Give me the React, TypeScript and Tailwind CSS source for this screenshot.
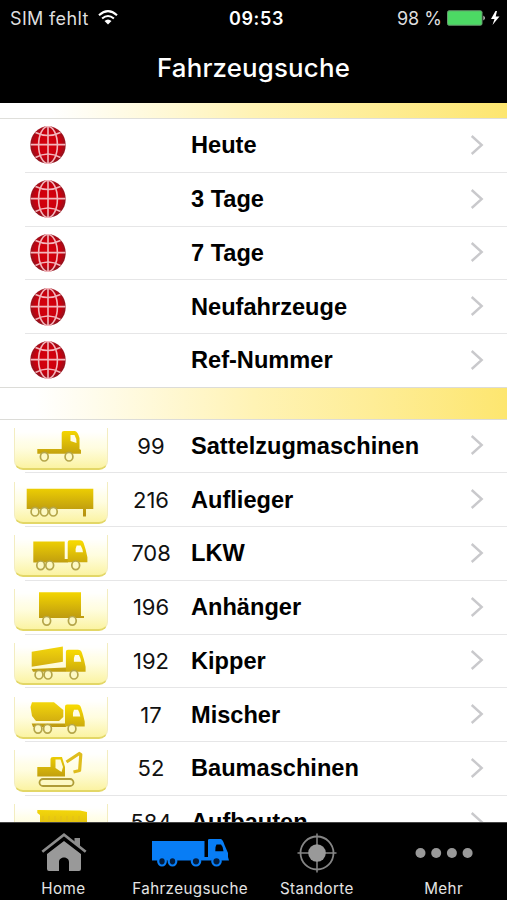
import type { ReactNode } from 'react';

const GOLD = 'url(#gold)';

function Wheels({ xs, y }: { xs: number[]; y: number }) {
  return (
    <>
      {xs.map((x) => (
        <ellipse key={x} cx={x} cy={y} rx="3.9" ry="4.3" fill="#fdf9c4" stroke="#b5a64a" strokeWidth="1.7" />
      ))}
    </>
  );
}

const cab = 'M2 0H12C14.5 0 15 .8 16 3L18 9.5L19.7 17V22H0V2Q0 0 2 0ZM9 5.2Q7.5 8 8 12H15.3Q15 8.5 13 5.2Z';

const art: Record<string, ReactNode> = {
  tractor: (
    <>
      <path d="M23.3 21H47.7V5Q47.7 3 50 3H61Q64 4 65.5 10V21L67 22V25.8H23.3Z" fill={GOLD} />
      <path d="M56.5 7H60.5Q63 11 62.5 15L56.5 13Z" fill="#fffde8" />
      <Wheels xs={[30.3, 55]} y={28.7} />
    </>
  ),
  trailer: (
    <>
      <path d="M12.7 6.7H79.3V27H72V34.5H69V27H12.7Z" fill={GOLD} />
      <Wheels xs={[21, 30.3, 39.3]} y={29.7} />
    </>
  ),
  lkw: (
    <>
      <path d="M19.3 6.5H50.7V24H54V27.5H19.3Z" fill={GOLD} />
      <path d={cab} transform="translate(53.7 5.3)" fill={GOLD} fillRule="evenodd" />
      <Wheels xs={[26.7, 35.7, 61.7]} y={30.3} />
    </>
  ),
  box: (
    <>
      <path d="M25 3.3H67V27H70V29H25Z" fill={GOLD} />
      <Wheels xs={[32.7, 58.3]} y={31.8} />
    </>
  ),
  tipper: (
    <>
      <path d="M17.7 8.7L48.9 3.5V18.7L17.7 23.7Z" fill="url(#goldTop)" />
      <path d="M17.7 26L52 24.5V28.8H19Z" fill={GOLD} />
      <path d={cab} transform="translate(51.9 6.8)" fill={GOLD} fillRule="evenodd" />
      <Wheels xs={[25, 34, 60]} y={31.7} />
    </>
  ),
  mixer: (
    <>
      <path d="M18 5.2H40L49.3 13V20L45 24H22L18 19L16.5 10Z" fill="url(#goldTop)" />
      <path d="M17.7 26.5H52V30H19Z" fill={GOLD} />
      <path d={cab} transform="translate(51 7.5)" fill={GOLD} fillRule="evenodd" />
      <Wheels xs={[24, 33.5, 58]} y={31.8} />
    </>
  ),
  digger: (
    <>
      <path d="M52.5 12L65.3 3.5L66.8 4.5L65.6 20.5L59.5 22" fill="none" stroke="#dfbd1d" strokeWidth="3.2" strokeLinejoin="round" />
      <path d="M23.3 17H36.5V9Q36.5 7 39 7H48L51 17V26.5H23.3Z" fill={GOLD} />
      <path d="M41.5 9.5H46.5L49 17L47.5 22L41.5 18Z" fill="#fffcd9" />
      <rect x="25.5" y="29" width="34" height="7" rx="3.5" fill="#fdf9c4" stroke="#af9c37" strokeWidth="1.8" />
    </>
  ),
  bodies: (
    <>
      <path d="M23.3 6L66 6.5L73 8V32H26V11L23.3 9Z" fill="url(#goldTop)" />
      <path d="M29 12V30M35 12V30M41 12V30M47 12V30M53 12V30M59 12V30M65 12V30" stroke="#e2bf1a" strokeWidth="1" />
    </>
  ),
};

function Globe() {
  return (
    <svg width="36" height="38" viewBox="0 0 36 38" fill="none" className="ml-[30px]">
      <defs>
        <radialGradient id="red" cx="50%" cy="48%" r="52%">
          <stop offset="0" stopColor="#d8000c" />
          <stop offset=".7" stopColor="#c9000e" />
          <stop offset="1" stopColor="#8e1520" />
        </radialGradient>
      </defs>
      <ellipse cx="18" cy="19" rx="17.7" ry="18.7" fill="url(#red)" />
      <g stroke="#f3b6bc" strokeWidth="1.6">
        <path d="M18 1V37M.5 18.6H35.5" />
        <ellipse cx="18" cy="19" rx="9.4" ry="18.6" />
        <path d="M5.5 6.5Q18 12.5 30.5 6.5M5.5 31.5Q18 24.5 30.5 31.5" />
      </g>
    </svg>
  );
}

function Chevron() {
  return (
    <svg width="14" height="22" viewBox="0 0 14 22" className="mr-[23px] mt-[-1px]">
      <path d="M1.7 2L11.7 11L1.7 20" fill="none" stroke="#c9c9cc" strokeWidth="2.4" />
    </svg>
  );
}

function Row({ icon, count, label }: { icon?: string; count?: number; label: string }) {
  return (
    <div className="flex h-[53.75px] shrink-0 flex-col">
      <div className="flex min-h-0 flex-1 items-center">
        <div className="w-[114px] shrink-0">
          {icon ? (
            <div className="ml-[14px] mt-[6px] h-[42px] w-[94px] rounded-b-[9px] border-x border-b-2 border-x-[#f3edc0] border-b-[#e3d767] bg-linear-to-b from-white via-[#fffde0] to-[#fbf3a2] shadow-[inset_0_12px_9px_-6px_#fff]">
              <svg width="94" height="40" viewBox="0 0 94 40" className="-ml-px">{art[icon]}</svg>
            </div>
          ) : (
            <Globe />
          )}
        </div>
        <div className="w-[74px] shrink-0 text-center font-[Inter,sans-serif] text-[22px] leading-[28px] text-[#111]">{count}</div>
        <div className="ml-[3px] flex-1 whitespace-nowrap font-['Liberation_Sans',Arial,sans-serif] text-[23.6px] font-bold leading-[28px] text-black">{label}</div>
        <Chevron />
      </div>
      <div className="ml-[25px] h-px shrink-0 bg-[#e6e6e7]" />
    </div>
  );
}

const vehicles = [
  { icon: 'tractor', count: 99, label: 'Sattelzugmaschinen' },
  { icon: 'trailer', count: 216, label: 'Auflieger' },
  { icon: 'lkw', count: 708, label: 'LKW' },
  { icon: 'box', count: 196, label: 'Anhänger' },
  { icon: 'tipper', count: 192, label: 'Kipper' },
  { icon: 'mixer', count: 17, label: 'Mischer' },
  { icon: 'digger', count: 52, label: 'Baumaschinen' },
  { icon: 'bodies', count: 584, label: 'Aufbauten' },
];

function Tab({ label, children }: { label: string; children: ReactNode }) {
  return (
    <div className="flex flex-1 flex-col items-center">
      <div className="flex h-[57px] items-center justify-center">{children}</div>
      <span className="whitespace-nowrap text-[15.2px] leading-[18px] tracking-[0.4px] text-[#e4e4e4]">{label}</span>
    </div>
  );
}

export default function App() {
  return (
    <div className="flex h-[900px] w-[507px] flex-col overflow-hidden bg-white font-[Inter,sans-serif]">
      <svg width="0" height="0" className="absolute">
        <defs>
          <linearGradient id="gold" x1="0" y1="2" x2="0" y2="32" gradientUnits="userSpaceOnUse">
            <stop offset="0" stopColor="#f6d800" />
            <stop offset="1" stopColor="#b79412" />
          </linearGradient>
          <linearGradient id="goldTop" x1="0" y1="0" x2="0" y2="1">
            <stop offset="0" stopColor="#f3d60b" />
            <stop offset="1" stopColor="#d3af10" />
          </linearGradient>
        </defs>
      </svg>
      <header className="h-[103px] shrink-0 bg-black text-white">
        <div className="grid h-[36px] grid-cols-3 items-center pl-[10px] pr-[7px] text-[18px]">
          <div className="flex items-center gap-[9px] whitespace-nowrap text-[#dedede]">
            <span className="tracking-[0.35px]">SIM fehlt</span>
            <svg width="20" height="15" viewBox="0 0 20 15" className="mt-[-2px]" fill="none" stroke="#fff" strokeWidth="2.1">
              <path d="M1 5.2Q10-2.8 19 5.2M4.1 8.5Q10 3.5 15.9 8.5" />
              <path d="M6.5 11Q10 8 13.5 11L10 14.5Z" fill="#fff" stroke="none" />
            </svg>
          </div>
          <div className="pl-[3px] text-center font-semibold tracking-[0.6px]">09:53</div>
          <div className="flex items-center justify-end whitespace-nowrap text-[#dedede]">
            <span>98 %</span>
            <svg width="54" height="18" viewBox="0 0 54 18" className="ml-[4px]">
              <rect x="1.5" y="1.8" width="34.5" height="14.4" rx="1.5" fill="#4cd964" stroke="#699970" />
              <path d="M37.5 6.5Q40 9 37.5 11.5Z" fill="#fff" />
              <path d="M49.5 2L45 10H48.5L46.5 16L53.5 7.5H49.7L51 2Z" fill="#fff" />
            </svg>
          </div>
        </div>
        <h1 className="pt-[15px] text-center text-[25.8px] font-medium leading-[34px] tracking-[0.2px]">Fahrzeugsuche</h1>
      </header>
      <main className="flex min-h-0 flex-1 flex-col overflow-hidden">
        <div className="h-[16px] shrink-0 border-b border-[#dfdfdb] bg-linear-to-r from-white from-10% via-[#fff3b5] via-50% to-[#fde66f]" />
        {['Heute', '3 Tage', '7 Tage', 'Neufahrzeuge', 'Ref-Nummer'].map((label) => (
          <Row key={label} label={label} />
        ))}
        <div className="mt-[-1px] h-[32.8px] shrink-0 border-y border-[#dcdcd8] bg-linear-to-r from-white from-7% via-[#fff3b5] via-50% to-[#fde66f]" />
        {vehicles.map((vehicle) => (
          <Row key={vehicle.label} {...vehicle} />
        ))}
      </main>
      <nav className="flex h-[78px] shrink-0 border-t border-[#444] bg-black">
        <Tab label="Home">
          <svg width="46" height="40" viewBox="0 0 46 40" className="ml-[1px] mt-[3px]">
            <path d="M6 21L23 8L40 21V36Q40 38 38 38H28V29C28 23 18 23 18 29V38H8Q6 38 6 36Z" fill="#999" />
            <path d="M1.3 18.7L23 1.8L44.7 18.7" fill="none" stroke="#000" strokeWidth="5" transform="translate(0 2)" />
            <path d="M33.5 5H39V14L33.5 10Z" fill="#8c8c8c" />
            <path d="M1.3 18.7L23 1.8L44.7 18.7" fill="none" stroke="#8c8c8c" strokeWidth="2.7" />
          </svg>
        </Tab>
        <Tab label="Fahrzeugsuche">
          <svg width="78" height="28" viewBox="0 0 78 28" className="ml-[1px] mt-[2px]" fill="#087df5">
            <path d="M0 2H52.5V18H56V21.5H0Z" />
            <path fillRule="evenodd" d="M56 1Q56 0 57.5 0H69Q71 1 72.5 6L76 14V18L77 21.5H56ZM64.5 5.5Q62.8 8 63.3 12.3H71.5Q71.5 8 69 5.5Z" />
            <g stroke="#087df5" fill="#031c3c" strokeWidth="2.2">
              <ellipse cx="10" cy="22.3" rx="3.8" ry="4.2" />
              <ellipse cx="20.5" cy="22.3" rx="3.8" ry="4.2" />
              <ellipse cx="44" cy="22.3" rx="4.2" ry="4.2" />
              <ellipse cx="64.5" cy="22.3" rx="4.2" ry="4.2" />
            </g>
          </svg>
        </Tab>
        <Tab label="Standorte">
          <svg width="40" height="40" viewBox="0 0 40 40" className="mt-[2px]" fill="none" stroke="#858585">
            <circle cx="20" cy="20" r="16.5" strokeWidth="1.8" />
            <path d="M20 .5V39.5M.5 20H39.5" strokeWidth="1.5" />
            <circle cx="20" cy="20" r="8.8" fill="#999" stroke="none" />
          </svg>
        </Tab>
        <Tab label="Mehr">
          <svg width="58" height="12" viewBox="0 0 58 12" className="mt-[2px]" fill="#999">
            <circle cx="5.5" cy="6" r="5" />
            <circle cx="21.2" cy="6" r="5" />
            <circle cx="36.9" cy="6" r="5" />
            <circle cx="52.6" cy="6" r="5" />
          </svg>
        </Tab>
      </nav>
    </div>
  );
}
